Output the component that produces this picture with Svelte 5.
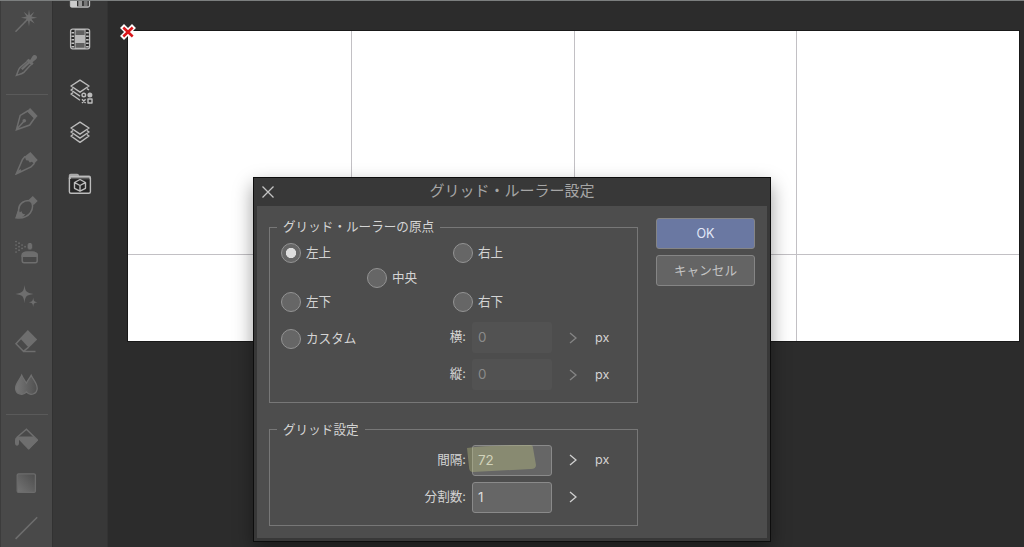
<script lang="ts">
  let origin = 'lt';
  let offsetX = '0';
  let offsetY = '0';
  let interval = '72';
  let divisions = '1';

  const origins = [
    { value: 'lt', label: '左上' },
    { value: 'rt', label: '右上' },
    { value: 'center', label: '中央' },
    { value: 'lb', label: '左下' },
    { value: 'rb', label: '右下' }
  ];
</script>

<div class="app">
  <nav class="tools">
    <div class="tool">
      <svg viewBox="0 0 24 24"><path d="M1.5 23.7 11.5 13.5" class="line"/><path class="fill" d="M15 1.6l1 5.6 4.4-3.4-3 4.7 5.8 1.2-5.8 1.1 3.2 4.8-4.7-3.2L15 18.4l-1-6-4.5 3.2 3.1-4.8-5.6-1.1 5.6-1.2-3-4.7 4.5 3.4z"/></svg>
    </div>
    <div class="tool">
      <svg viewBox="0 0 24 24"><path class="line" d="M13.4 8.2 6 14.6c-1.9 2-2.5 5.3-3.5 7.8 2.7-.9 5.9-1.6 7.7-3.3l6.6-7.3"/><path class="fill" d="M12.4 7.8l2-2 1.8 1.1 2.1-3.5c2.6-3.5 6.6.2 3.8 2.8l-3.6 3 1.1 1.5-2 1.9-2-2-7 6.3-1.6-1.4 6.9-6.5z"/></svg>
    </div>
    <hr />
    <div class="tool">
      <svg viewBox="0 0 24 24"><path class="line" d="M13.6 4 6.2 8.4 2.4 22.7 15.7 18 20.6 11zM2.5 22.5l7.2-8"/><path class="fill" d="M13.3 3.8 16.1 1l7.5 8-2.8 3z"/><circle class="fill" cx="10.3" cy="13.8" r="1.8"/></svg>
    </div>
    <div class="tool">
      <svg viewBox="0 0 24 24"><path class="line" d="M11.2 5.2 8.5 8.4 2.2 23 17 15.9l3.5-3.7M2.5 22.6l4.3-4"/><path class="fill" d="M10.7 5.5 16.4 1l7.3 8-3.6 3.8-2.2-2-2.2.8-1.3-2.2-2.3-.1z"/></svg>
    </div>
    <div class="tool">
      <svg viewBox="0 0 24 24"><path class="line" d="M15.3 5.5C9.2 5.5 4.3 9.3 4.6 15.5L2.1 22.8c5.4.6 11-.5 14.3-5 2.4-3.4 2.7-6.7 1.4-10z"/><path class="fill" d="M14.8 4.7 18.8 1l4.9 5-4 4zM4.3 14.8c.8.5 1.2 1.5 1.4 2.4l2-1c.1 1.8 1.2 3.2 3.6 3.1-2 3.2-5.8 4-9.7 3.7z"/></svg>
    </div>
    <div class="tool">
      <svg viewBox="0 0 24 24"><path class="fill" d="M14.4 3h3v6.6h-3zM13.6 4.2h4.6v4.2h-4.6zM7.5 17c0-4 2-5.8 5.5-5.8h5.4c3.5 0 5.5 2 5.5 5.8z"/><rect class="line" x="8.2" y="13" width="15" height="9.7" rx="2"/><path d="M2 1.5h.1M2 5h.1M2 8.5h.1M2 12h.1M5 3.2h.1M5 6.7h.1M5 10.2h.1M8 5h.1M8 8.3h.1M11 6.7h.1" class="dots"/></svg>
    </div>
    <div class="tool">
      <svg viewBox="0 0 24 24"><path class="fill" d="M10.5 1c.8 6.8 1.8 7.7 9 9-7.2 1.2-8.2 2-9 9.3-.8-7.3-1.8-8.1-9-9.3 7.2-1.3 8.2-2.2 9-9zM19.2 13.5c.5 3.7 1 4.2 4.4 4.8-3.4.6-3.9 1.2-4.4 4.8-.5-3.6-1-4.2-4.4-4.8 3.4-.6 3.9-1.1 4.4-4.8z"/></svg>
    </div>
    <div class="tool">
      <svg viewBox="0 0 24 24"><path class="fill" d="M13.8 1 23.2 10.5 14.8 18.7 6 9.3z"/><path class="line" d="M6.8 9.5 2 14.8l7.4 7.5 5.3-4.2M9 22.4h12.5"/></svg>
    </div>
    <div class="tool">
      <svg viewBox="0 0 24 24">
        <defs><linearGradient id="drops"><stop stop-color="#777"/><stop offset="1" stop-color="#505050"/></linearGradient></defs>
        <path fill="url(#drops)" stroke="#707070" stroke-width="1.3" d="M7.7 2.2c1.3 3.3 3 5 4.7 8 1.5-3.2 3.3-5 4.8-8 2.2 5.1 6 8.1 6 13.1 0 6-7.2 8-10.8 3.6C8.8 23.3 1.6 21.3 1.6 15.3c0-5 4-8 6.1-13.1z"/>
      </svg>
    </div>
    <hr />
    <div class="tool">
      <svg viewBox="0 0 24 24"><path class="line" d="M12.4 2.2 3.4 10 14.5 21.8 23.4 13z"/><path class="fill" d="M5 9.6h14.2l4.7 3.6-8.8 9.2L5 11.8v4.5c0 3.3-4 3.3-4 0v-3.1C1 10.9 2.7 9.6 5 9.6z"/></svg>
    </div>
    <div class="tool">
      <svg viewBox="0 0 24 24">
        <defs><linearGradient id="grad" x1="0" y1="1" x2="1" y2="0"><stop stop-color="#757575"/><stop offset="1" stop-color="#4d4d4d"/></linearGradient></defs>
        <rect x="3.2" y="2.8" width="18.2" height="18.6" rx="1.5" fill="url(#grad)" stroke="#6c6c6c" stroke-width="1.3"/>
      </svg>
    </div>
    <div class="tool">
      <svg viewBox="0 0 24 24"><path class="line" d="M1.6 22.9 23.2 1.3"/></svg>
    </div>
  </nav>

  <aside class="palette">
    <svg width="24" height="8" viewBox="0 0 24 8"><path d="M2.5 0v4.5q0 1.5 1.5 1.5h16q1.5 0 1.5-1.5V0" fill="#303030" stroke="#bcbcbc" stroke-width="1.3"/><path d="M3 0h6v6H3z" fill="#ccc"/><path d="M10.3 0h3.8v5h-3.8z" fill="#999"/><path d="M15.8 0h3.8v5h-3.8z" fill="#777"/></svg>
    <svg class="film" width="24" height="24" viewBox="0 0 24 24"><rect x="2.6" y="2.2" width="19" height="19.6" rx="2" fill="#292929" stroke="#bcbcbc" stroke-width="1.3"/><path d="M6.6 2h11v20h-11z" fill="#b8b8b8"/><path d="M7.6 3.2h9V8h-9zM7.6 16h9v4.8h-9z" fill="#606060"/><path d="M4.8 4v18M19.4 4v18" stroke="#c4c4c4" stroke-width="2.6" stroke-dasharray="1.6 1.9" stroke-dashoffset="-1"/></svg>
    <svg class="materials" width="28" height="28" viewBox="0 0 28 28"><g class="outline"><path d="M12 2.2 21 8l-9 6.2L3 8zM5 10.6 3 12l9 6.2M5 14.7 3 16l9 6.3M19 10.6l2 1.4"/><circle cx="15.8" cy="17" r="1.8"/><path d="M20 21h4v4h-4zM14 21.3l3.6 3.6M17.6 21.3 14 24.9"/></g><circle cx="21.9" cy="17" r="2.5" fill="#bcbcbc"/></svg>
    <svg class="layers" width="24" height="26" viewBox="0 0 24 26"><g class="outline"><path d="M12 2.2 21 8l-9 6.2L3 8zM5 10.6 3 12l9 6.2 9-6.2-2-1.4M5 14.7 3 16l9 6.4 9-6.4-2-1.3"/></g></svg>
    <svg class="folder" width="26" height="26" viewBox="0 0 26 26"><path d="M3 22V4h10v4h10v14z" fill="#262626"/><path d="M1.8 7V3.6q0-1.9 1.9-1.9h6.5q1.6 0 2 1.9h9.9q1.8 0 1.8 1.8V7z" fill="#a8a8a8"/><path d="M4 6.2h18.5" stroke="#303030" stroke-width="1"/><g class="outline"><rect x="2.4" y="4.6" width="21" height="16.6" rx="1.5"/><path d="M13 7.5l5.5 3v5.8L13 19.2l-5.5-2.9v-5.8zM7.7 10.7l5.3 2.8 5.3-2.8M13 13.5v5.7"/></g></svg>
  </aside>

  <main class="workspace">
    <div class="canvas">
      {#each Array(8) as _}
        <i></i>
      {/each}
    </div>
    <svg class="origin-mark" viewBox="0 0 16 16"><path d="M4 4l8 8M12 4l-8 8" stroke="#fff" stroke-width="5.6" stroke-linecap="square"/><path d="M3.3 3.5l9.4 9M12.7 3.5l-9.4 9" stroke="#d9161b" stroke-width="2.5"/></svg>
  </main>

  <div class="dialog" role="dialog">
    <header>
      <svg class="close" viewBox="0 0 14 14"><path d="M1.5 1.5l11 11M12.5 1.5l-11 11"/></svg>
      <span>グリッド・ルーラー設定</span>
    </header>
    <div class="body">
      <div class="settings">
        <fieldset class="group origin">
          <legend>グリッド・ルーラーの原点</legend>
          <div class="origins">
            {#each origins as item}
              <label class="radio {item.value}">
                <input type="radio" bind:group={origin} value={item.value} />{item.label}
              </label>
            {/each}
          </div>
          <div class="custom">
            <label class="radio">
              <input type="radio" bind:group={origin} value="custom" />カスタム
            </label>
            <div>
              <div class="row disabled">
                <span class="name">横:</span>
                <input type="text" bind:value={offsetX} disabled />
                <svg viewBox="0 0 8 12"><path d="M1 1l6 5-6 5"/></svg>
                <span class="unit">px</span>
              </div>
              <div class="row disabled">
                <span class="name">縦:</span>
                <input type="text" bind:value={offsetY} disabled />
                <svg viewBox="0 0 8 12"><path d="M1 1l6 5-6 5"/></svg>
                <span class="unit">px</span>
              </div>
            </div>
          </div>
        </fieldset>
        <fieldset class="group grid">
          <legend>グリッド設定</legend>
          <div class="row">
            <span class="name">間隔:</span>
            <span class="field">
              <input type="text" bind:value={interval} />
              <svg class="marker" viewBox="0 0 72 30"><path d="M1 4Q20 1 64 1q3 0 3 3l3 17q0 4-5 4L7 28q-4 0-4-5z"/></svg>
            </span>
            <svg viewBox="0 0 8 12"><path d="M1 1l6 5-6 5"/></svg>
            <span class="unit">px</span>
          </div>
          <div class="row">
            <span class="name">分割数:</span>
            <input type="text" bind:value={divisions} />
            <svg viewBox="0 0 8 12"><path d="M1 1l6 5-6 5"/></svg>
            <span class="unit"></span>
          </div>
        </fieldset>
      </div>
      <div class="buttons">
        <button class="ok">OK</button>
        <button>キャンセル</button>
      </div>
    </div>
  </div>
</div>

<style>
  :global(body) {
    background: #2c2c2c;
  }
  .app {
    position: relative;
    display: flex;
    box-sizing: border-box;
    width: 1024px;
    height: 547px;
    overflow: hidden;
    background: #2c2c2c;
    border-top: 1px solid #7c7f7f;
    color: #d4d4d4;
    font: 12.6px/18px Inter, "Noto Sans CJK JP", sans-serif;
  }
  .app * {
    box-sizing: border-box;
  }

  .tools {
    width: 53px;
    flex: none;
    background: #494949;
    border-left: 1px solid #3c3c3c;
    border-right: 1px solid #323232;
  }
  .tool {
    display: flex;
    align-items: center;
    height: 44.4px;
    padding-left: 13px;
  }
  .tool:first-child {
    margin-top: -3px;
  }
  .tool svg {
    width: 24px;
    height: 24px;
  }
  .tools hr {
    height: 9.6px;
    margin: 0 4px 0 5px;
    border: 0;
    background: linear-gradient(#5a5a5a, #5a5a5a) 0 7px / 100% 1px no-repeat;
  }
  .fill {
    fill: #6e6e6e;
  }
  .line {
    fill: none;
    stroke: #6e6e6e;
    stroke-width: 1.5;
  }
  .dots {
    stroke: #6c6c6c;
    stroke-width: 1.7;
    stroke-linecap: round;
  }

  .palette {
    display: flex;
    flex-direction: column;
    align-items: flex-start;
    flex: none;
    width: 55px;
    padding-left: 15px;
    background: #383838;
    border-right: 1px solid #333;
  }
  .palette svg {
    flex: none;
  }
  .film {
    margin-top: 18px;
  }
  .materials {
    margin-top: 27px;
  }
  .layers {
    margin-top: 14px;
  }
  .folder {
    margin: 26px 0 0 -1px;
  }
  .outline {
    fill: none;
    stroke: #bcbcbc;
    stroke-width: 1.4;
    stroke-linejoin: round;
  }

  .workspace {
    position: relative;
    padding: 30px 0 0 20px;
  }
  .canvas {
    display: grid;
    grid-template-columns: 224px 223px 222px 222px;
    grid-template-rows: 224px 86px;
    background: #fff;
    box-shadow: 0 0 0 1px #191919;
  }
  .canvas i {
    border-right: 1px solid #c2c0c4;
    border-bottom: 1px solid #c2c0c4;
  }
  .canvas i:nth-child(4n) {
    border-right: 0;
  }
  .canvas i:nth-child(n + 5) {
    border-bottom: 0;
  }
  .origin-mark {
    position: absolute;
    left: 12px;
    top: 23px;
    width: 16px;
    height: 16px;
  }

  .dialog {
    position: absolute;
    left: 253px;
    top: 176px;
    width: 518px;
    height: 365px;
    display: flex;
    flex-direction: column;
    padding: 0 3px 3px;
    background: #383838;
    border: 1px solid #0d0d0d;
    box-shadow: 0 8px 18px rgba(0, 0, 0, 0.4);
  }
  header {
    display: flex;
    align-items: center;
    height: 28px;
    color: #a6a6a6;
    font-size: 15px;
  }
  header span {
    flex: 1;
    padding: 0 18px 2px 0;
    text-align: center;
  }
  .close {
    width: 14px;
    height: 14px;
    margin: -1px 0 0 4px;
    fill: none;
    stroke: #c4c4c4;
    stroke-width: 1.3;
  }
  .body {
    flex: 1;
    display: flex;
    padding: 12px;
    background: #4d4d4d;
  }
  .settings {
    width: 369px;
  }
  .group {
    min-width: 0;
    margin: 0;
    border: 1px solid #777;
    padding: 0;
  }
  .origin {
    height: 184.5px;
    margin-bottom: 18px;
  }
  .grid {
    height: 105px;
  }
  legend {
    margin-left: 7px;
    padding: 0 6px;
    line-height: 18px;
  }
  .origins {
    display: grid;
    grid-template-columns: 86px 86px 1fr;
    grid-template-rows: repeat(3, 24.5px);
    margin: 5px 0 0 11px;
  }
  .radio {
    display: flex;
    align-items: center;
    gap: 5px;
    white-space: nowrap;
  }
  .lt { grid-area: 1 / 1; }
  .rt { grid-area: 1 / 3; }
  .center { grid-area: 2 / 2; }
  .lb { grid-area: 3 / 1; }
  .rb { grid-area: 3 / 3; }
  .radio input {
    appearance: none;
    flex: none;
    width: 20px;
    height: 20px;
    margin: 0;
    border: 1.5px solid #939393;
    border-radius: 50%;
    background: #666;
  }
  .radio input:checked {
    background: radial-gradient(circle, #dedede 4.8px, #666 5.4px);
  }
  .custom {
    display: flex;
    align-items: flex-start;
    justify-content: space-between;
    margin: 4.5px 0 0 11px;
  }
  .custom .radio {
    height: 39px;
  }

  .row {
    display: flex;
    align-items: center;
    justify-content: flex-end;
    height: 37px;
    padding-right: 23px;
  }
  .grid .row:first-of-type {
    margin-top: 3px;
  }
  .name {
    margin-right: 6px;
    padding-bottom: 1px;
  }
  .field {
    position: relative;
    display: flex;
  }
  .row input {
    width: 80px;
    height: 31px;
    padding: 0 5px 1px;
    border: 1px solid #8a8a8a;
    border-radius: 3px;
    background: #666;
    color: #dcdcdc;
    font: inherit;
    font-size: 13.4px;
  }
  .row > svg {
    width: 8px;
    height: 12px;
    margin: 0 18px 0 17px;
    fill: none;
    stroke: #d0d0d0;
    stroke-width: 1.3;
  }
  .row.disabled input {
    border-color: transparent;
    background: #525252;
    color: #8b8b8b;
  }
  .row.disabled > svg {
    stroke: #858585;
  }
  .unit {
    width: 19px;
  }
  .marker {
    position: absolute;
    left: -6px;
    top: -1px;
    width: 72px;
    height: 30px;
    fill: rgba(192, 196, 132, 0.38);
    pointer-events: none;
  }

  .buttons {
    display: flex;
    flex-direction: column;
    gap: 6px;
    margin-left: 18px;
  }
  button {
    width: 99px;
    height: 31px;
    padding: 0;
    border: 1px solid #858585;
    border-radius: 3px;
    background: #646464;
    color: #c4c4c4;
    font: inherit;
  }
  .ok {
    background: #6a78a2;
    color: #e2e8f8;
  }
</style>
